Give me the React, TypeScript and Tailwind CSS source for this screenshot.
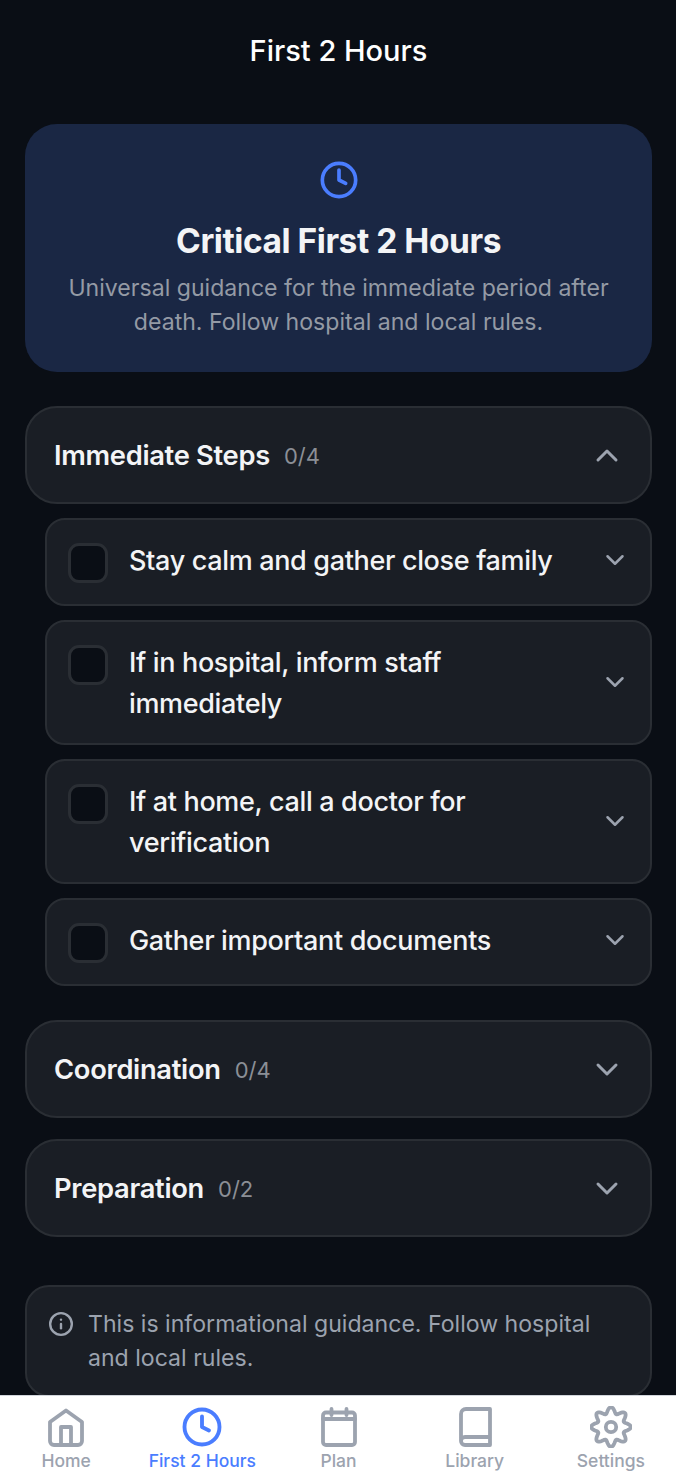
import { ChevronDown, ChevronUp, Clock, Info } from 'lucide-react';

const STEPS = [
  { text: 'Stay calm and gather close family' },
  { text: 'If in hospital, inform staff immediately', tall: true },
  { text: 'If at home, call a doctor for verification', tall: true },
  { text: 'Gather important documents' },
];

// 8 lobe cog outline, centre 21,21
function gearPath() {
  const points: string[] = [];
  for (let i = 0; i < 160; i++) {
    const angle = (i / 160) * Math.PI * 2;
    const r = 16.8 + 3 * Math.cos(8 * angle);
    points.push(`${(21 + r * Math.sin(angle)).toFixed(2)} ${(21 - r * Math.cos(angle)).toFixed(2)}`);
  }
  return `M${points.join('L')}Z`;
}

function HomeIcon() {
  return (
    <svg viewBox="0 0 42 42" fill="none" stroke="currentColor" strokeWidth={3.8} strokeLinejoin="round" className="h-[42px] w-[42px]">
      <path d="M21 4.5 37 16V35a4 4 0 0 1-4 4H9a4 4 0 0 1-4-4V16Z" />
      <path d="M16 39V21H26V39" />
    </svg>
  );
}

function PlanIcon() {
  return (
    <svg viewBox="0 0 42 42" fill="none" stroke="currentColor" strokeWidth={3.8} strokeLinecap="round" className="h-[42px] w-[42px]">
      <rect x="5" y="6.5" width="32" height="32.5" rx="3" />
      <path d="M5 13H37M13.5 3V9M28.5 3V9" />
    </svg>
  );
}

function BookIcon() {
  return (
    <svg viewBox="0 0 42 42" fill="none" stroke="currentColor" strokeWidth={3.8} strokeLinejoin="round" className="h-[42px] w-[42px]">
      <path d="M7 35V8a5 5 0 0 1 5-5H36V39H11a4 4 0 0 1-4-4 4 4 0 0 1 4-4H36" />
    </svg>
  );
}

function GearIcon() {
  return (
    <svg viewBox="0 0 42 42" fill="none" stroke="currentColor" strokeWidth={3.8} strokeLinejoin="round" className="h-[42px] w-[42px]">
      <path d={gearPath()} />
      <circle cx="21" cy="21" r="5.2" />
    </svg>
  );
}

function ClockIcon() {
  return <Clock className="h-[42px] w-[42px]" strokeWidth={2.2} />;
}

const TABS = [
  { label: 'Home', icon: HomeIcon },
  { label: 'First 2 Hours', icon: ClockIcon, active: true },
  { label: 'Plan', icon: PlanIcon },
  { label: 'Library', icon: BookIcon },
  { label: 'Settings', icon: GearIcon },
];

function SectionHeader({ title, count, open }: { title: string; count: string; open?: boolean }) {
  return (
    <div className="flex h-[98px] items-center justify-between rounded-[32px] border-2 border-[#2a2e34] bg-[#1a1e25] pl-[27px] pr-[25px]">
      <div className="flex items-center gap-[14px] pt-[2px]">
        <span className="text-[27.3px] font-semibold tracking-[-0.3px] text-[#f3f4f6]">{title}</span>
        <span className="text-[22px] text-[#8b8f96]">{count}</span>
      </div>
      {open ? (
        <ChevronUp className="h-[36px] w-[36px] translate-y-[0.5px] text-[#9ca3af]" strokeWidth={2} />
      ) : (
        <ChevronDown className="h-[36px] w-[36px] translate-y-[0.5px] text-[#9ca3af]" strokeWidth={2} />
      )}
    </div>
  );
}

export default function App() {
  return (
    <div className="flex h-[1474px] w-[676px] flex-col overflow-hidden bg-[#0a0e15] font-['Inter',sans-serif]">
      {/* Scroll area */}
      <div className="min-h-0 flex-1 overflow-hidden pl-[25px] pr-[24px]">
        <h1 className="flex h-[102px] items-center justify-center text-[29px] font-medium text-white">First 2 Hours</h1>

        <div className="mt-[22px] flex h-[248px] flex-col items-center rounded-[32px] bg-[#1a2744] px-[32px] pt-[36px] text-center">
          <Clock className="h-[40px] w-[40px] text-[#4a7dff]" strokeWidth={2.2} />
          <h2 className="mt-[17px] text-[33.5px] font-bold leading-[48px] tracking-[-0.45px] text-[#f3f4f6]">Critical First 2 Hours</h2>
          <p className="mt-[6px] text-[23.1px] leading-[34px] text-[#949aa5]">
            Universal guidance for the immediate period after death. Follow hospital and local rules.
          </p>
        </div>

        <div className="mt-[34px]">
          <SectionHeader title="Immediate Steps" count="0/4" open />
        </div>

        <div className="ml-[20px] mt-[14px] flex flex-col gap-[14px]">
          {STEPS.map((step) => (
            <div
              key={step.text}
              className={
                step.tall
                  ? 'flex items-start rounded-[20px] border-2 border-[#2a2e34] bg-[#1a1e25] pb-[19px] pl-[21px] pr-[20px] pt-[20px]'
                  : 'flex items-start rounded-[20px] border-2 border-[#2a2e34] bg-[#1a1e25] pb-[21px] pl-[21px] pr-[20px] pt-[20px]'
              }
            >
              <div className="mt-[3px] h-[40px] w-[40px] shrink-0 rounded-[11px] border-[3px] border-[#2a2e34] bg-[#0a0e15]" />
              <span className="ml-[21px] mr-[16px] flex-1 text-[27px] font-medium leading-[41px] tracking-[-0.34px] text-[#f3f4f6]">{step.text}</span>
              <ChevronDown
                className={
                  step.tall
                    ? 'h-[30px] w-[30px] shrink-0 -translate-y-px self-center text-[#9ca3af]'
                    : 'h-[30px] w-[30px] shrink-0 -translate-y-[2px] self-center text-[#9ca3af]'
                }
                strokeWidth={2}
              />
            </div>
          ))}
        </div>

        <div className="mt-[34px]">
          <SectionHeader title="Coordination" count="0/4" />
        </div>
        <div className="mt-[21px]">
          <SectionHeader title="Preparation" count="0/2" />
        </div>

        <div className="mt-[48px] flex gap-[14px] rounded-[24px] border-2 border-[#2a2e34] bg-[#1a1e25] pb-[20px] pl-[21px] pr-[24px] pt-[20px]">
          <Info className="mt-[4px] h-[26px] w-[26px] shrink-0 text-[#9ca3af]" strokeWidth={2.2} />
          <p className="text-[23.1px] leading-[34px] text-[#9ca3af]">This is informational guidance. Follow hospital and local rules.</p>
        </div>
      </div>

      {/* Bottom tabs */}
      <nav className="h-[79px] shrink-0 border-t border-[#d1d5db] bg-white">
        <div className="-ml-[2px] flex w-[681px]">
          {TABS.map((tab) => {
            const Icon = tab.icon;
            return (
              <div
                key={tab.label}
                className={
                  tab.active
                    ? 'flex flex-1 flex-col items-center pt-[10px] text-[#4a7dff]'
                    : 'flex flex-1 flex-col items-center pt-[10px] text-[#9ca3af]'
                }
              >
                <Icon />
                <span className="mt-[3px] text-[17.5px] font-medium leading-[20px]">{tab.label}</span>
              </div>
            );
          })}
        </div>
      </nav>
    </div>
  );
}
